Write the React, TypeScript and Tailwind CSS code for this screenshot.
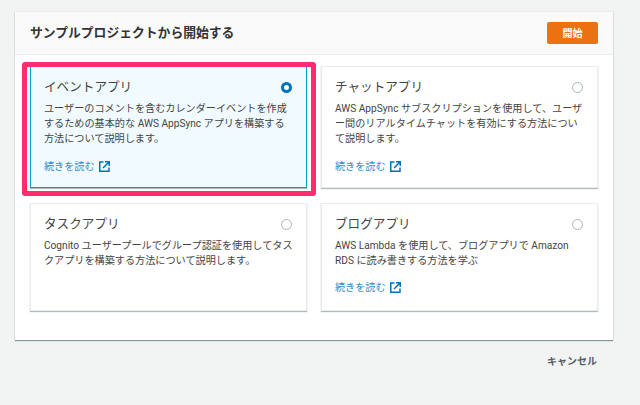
const font = { fontFamily: 'Roboto, "Noto Sans CJK JP", sans-serif' };

function ExternalIcon() {
    return (
        <svg width="11" height="11" viewBox="0 0 11 11" fill="none" stroke="#0073bb" strokeWidth="1.5" className="shrink-0">
            <path d="M4.5 1H0.75V10.25H10V6.5" />
            <path d="M4 7L10 1M6 0.75H10.25V5" />
        </svg>
    );
}

function SampleCard({ title, lines, selected, link = true }: { title: string; lines: string[]; selected?: boolean; link?: boolean }) {
    return (
        <div
            className={
                selected
                    ? "relative pl-[13px] pr-[14px] bg-[#f1faff] border border-[#00a1c9] shadow-[0_1px_1px_0_rgba(0,28,36,0.3)]"
                    : "relative pl-[13px] pr-[14px] bg-white border border-[#eaeded] shadow-[0_1px_1px_0_rgba(0,28,36,0.3)]"
            }
        >
            <div className="flex items-center justify-between h-[18px] mt-[11px] text-[12.6px] leading-[18px] text-[#444]">
                <span className="whitespace-nowrap">{title}</span>
                <span
                    className={
                        selected
                            ? "w-[11px] h-[11px] rounded-full border-[3px] border-[#0073bb] bg-white"
                            : "w-[11px] h-[11px] rounded-full border border-[#aab7b8] bg-white"
                    }
                />
            </div>
            <div className="mt-[5px] text-[10.15px] leading-[15.2px] text-[#444]">
                {lines.map((line) => (
                    <div key={line} className="whitespace-nowrap">{line}</div>
                ))}
            </div>
            {link && (
                <div className="flex items-center gap-[4px] mt-[12px] h-[15px] text-[10.15px] text-[#2b8fc9]">
                    <span>続きを読む</span>
                    <ExternalIcon />
                </div>
            )}
        </div>
    );
}

export default function App() {
    return (
        <div className="relative w-[640px] h-[405px] overflow-hidden bg-[#f2f3f3] pt-[12px] pl-[15px]" style={font}>
            <div className="w-[598px] h-[328px] bg-white shadow-[0_1px_1px_0_rgba(0,28,36,0.4),0_0_1px_0_rgba(0,28,36,0.2)]">
                <div className="flex items-center justify-between h-[43px] pl-[15px] pr-[15px] bg-[#fafafa] border-b border-[#eaeded]">
                    <h2 className="text-[12.8px] font-bold text-[#333] whitespace-nowrap">サンプルプロジェクトから開始する</h2>
                    <button className="w-[51px] h-[22px] rounded-[2px] bg-[#ec7211] text-white text-[10px] font-bold">開始</button>
                </div>
                <div className="grid grid-cols-[277px_277px] grid-rows-[122px_108px] gap-x-[14px] gap-y-[15px] pt-[11px] pl-[15px]">
                    <SampleCard
                        selected
                        title="イベントアプリ"
                        lines={[
                            "ユーザーのコメントを含むカレンダーイベントを作成",
                            "するための基本的な AWS AppSync アプリを構築する",
                            "方法について説明します。",
                        ]}
                    />
                    <SampleCard
                        title="チャットアプリ"
                        lines={[
                            "AWS AppSync サブスクリプションを使用して、ユーザ",
                            "ー間のリアルタイムチャットを有効にする方法につい",
                            "て説明します。",
                        ]}
                    />
                    <SampleCard
                        title="タスクアプリ"
                        link={false}
                        lines={[
                            "Cognito ユーザープールでグループ認証を使用してタス",
                            "クアプリを構築する方法について説明します。",
                        ]}
                    />
                    <SampleCard
                        title="ブログアプリ"
                        lines={[
                            "AWS Lambda を使用して、ブログアプリで Amazon",
                            "RDS に読み書きする方法を学ぶ",
                        ]}
                    />
                </div>
            </div>
            <div className="w-[598px] flex justify-end pr-[16px] mt-[14px] text-[10px] font-bold text-[#545b64]">キャンセル</div>
            {/* annotation frame drawn over the selected card */}
            <div className="absolute left-[22px] top-[62px] w-[294px] h-[134px] border-[5px] border-[#ff2d6f] rounded-[3px]" />
        </div>
    );
}
